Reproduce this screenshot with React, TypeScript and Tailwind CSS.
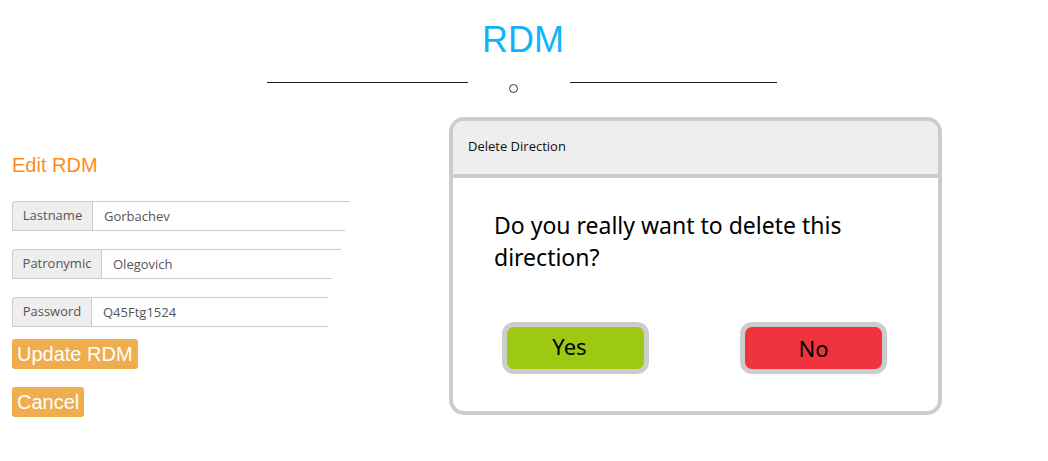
import React from "react";

function Field({ label, value, labelW, topW, botW }: { label: string; value: string; labelW: string; topW: string; botW: string }) {
  return (
    <div className="flex h-[30px] relative">
      <div className={`${labelW} h-full flex items-center justify-center bg-[#eeeeee] border border-[#cccccc] rounded-l-[3px] text-[13px] text-[#555]`}>
        {label}
      </div>
      <div className={`${topW} h-full border-t border-[#cccccc] flex items-center pl-[11px] text-[13px] text-[#555]`}>
        {value}
      </div>
      <div className={`absolute bottom-0 left-0 ${botW} h-px bg-[#cccccc]`} />
    </div>
  );
}

export default function App() {
  return (
    <div className="w-[1048px] h-[461px] bg-white relative overflow-hidden" style={{ fontFamily: "'Open Sans', sans-serif" }}>
      <div className="flex flex-col items-center pt-[19px]">
        <div className="text-[36px] leading-[42px] text-[#12b3fa] ml-[-2px]" style={{ fontFamily: "'Liberation Sans', Arial, sans-serif" }}>RDM</div>
        <div className="flex items-start mt-[21px] ml-[-5px]">
          <div className="w-[201px] h-px bg-[#222]" />
          <div className="w-[102px] flex justify-center">
            <div className="w-[9px] h-[9px] rounded-full border border-[#333] mt-[2px] ml-[-10px]" />
          </div>
          <div className="w-[207px] h-px bg-[#222]" />
        </div>
      </div>

      <div className="flex mt-[24px]">
        <div className="pl-[12px] w-[449px] pt-[36px]">
          <div className="text-[20px] leading-[24px] text-[#ff8c1a]" style={{ fontFamily: "'Liberation Sans', Arial, sans-serif" }}>Edit RDM</div>
          <div className="mt-[24px] flex flex-col gap-[18px]">
            <Field label="Lastname" value="Gorbachev" labelW="w-[81px]" topW="w-[257px]" botW="w-[333px]" />
            <Field label="Patronymic" value="Olegovich" labelW="w-[90px]" topW="w-[239px]" botW="w-[320px]" />
            <Field label="Password" value="Q45Ftg1524" labelW="w-[80px]" topW="w-[236px]" botW="w-[316px]" />
          </div>
          <div className="mt-[12px] flex flex-col items-start gap-[18px]" style={{ fontFamily: "'Liberation Sans', Arial, sans-serif" }}>
            <div className="h-[30px] px-[5px] bg-[#f0ad4e] rounded-[3px] text-white text-[20px] leading-[30px]">Update RDM</div>
            <div className="h-[30px] px-[5px] bg-[#f0ad4e] rounded-[3px] text-white text-[20px] leading-[30px]">Cancel</div>
          </div>
        </div>

        <div className="w-[493px] h-[298px] border-[4px] border-[#cccccc] rounded-[15px] overflow-hidden flex flex-col">
          <div className="h-[57px] shrink-0 bg-[#eeeeee] border-b-[4px] border-[#cccccc] flex items-center pl-[15px] text-[13px] text-[#111] pb-[2px]">
            Delete Direction
          </div>
          <div className="flex-1 relative">
            <div className="pl-[41px] pt-[31px] text-[23px] leading-[32px] text-black w-[420px]" style={{ fontFamily: "'Noto Sans', sans-serif" }}>
              Do you really want to delete this direction?
            </div>
            <div className="flex justify-between pl-[49px] pr-[51px] mt-[49px]" style={{ fontFamily: "'Noto Sans', sans-serif" }}>
              <div className="w-[147px] h-[52px] border-[5px] border-[#cccccc] rounded-[12px] bg-[#9dc814] flex justify-center items-center text-[22px] text-black pb-[4px] pr-[12px]">Yes</div>
              <div className="w-[147px] h-[52px] border-[5px] border-[#cccccc] rounded-[12px] bg-[#f0343e] flex justify-center items-center text-[22px] text-black">No</div>
            </div>
          </div>
        </div>
      </div>
    </div>
  );
}
